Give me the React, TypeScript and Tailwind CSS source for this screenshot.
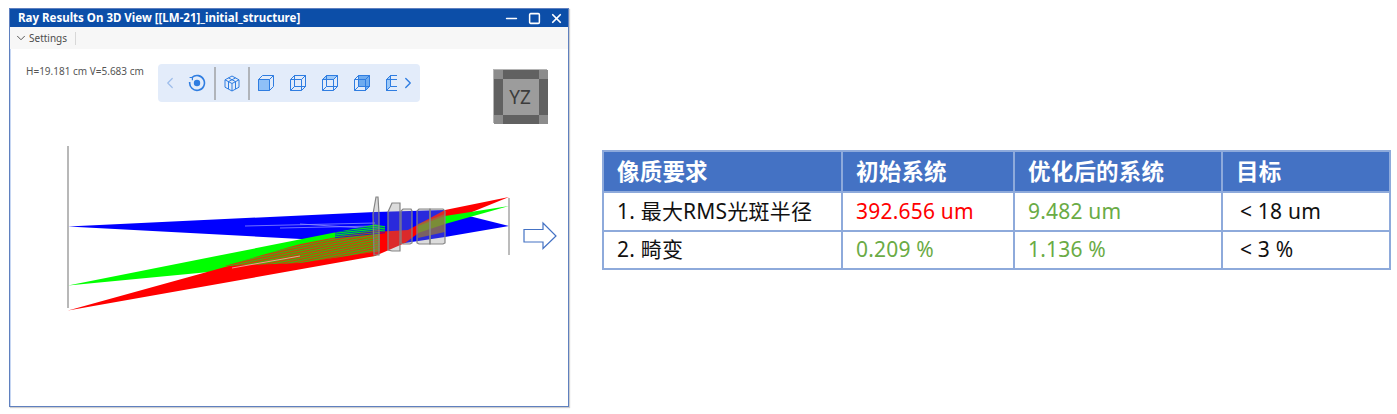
import { Minus, Square, X, ChevronDown, ChevronLeft, ChevronRight } from 'lucide-react';

const blue = '#2f7de1';
const hatch = Array.from({ length: 26 }, (_, i) => 229 + i * 1.2);
const upperHatch = Array.from({ length: 5 }, (_, i) => 224.5 + i * 1.8);
const lenses = [
  'M374 255 L373 214 L376 197 L378 197 L379 214 L379 255 Z',
  'M388 250 L388 212 L392 203 L400 203 L400 251 L392 251 Z',
  'M401 243 L401 211 L403 209 L411 209 L412 211 L412 243 L410 244 L403 244 Z',
  'M417 243 L417 211 L419 209 L430 209 L430 244 L419 244 Z',
  'M430 244 L430 209 L443 209 L445 211 L445 243 L443 244 Z',
];

// face: which side of the wire cube is shaded
function CubeIcon({ face }: { face: 'front' | 'back' | 'top' | 'side' | 'left' }) {
  if (face === 'front') {
    return (
      <svg width="18" height="18" viewBox="0 0 18 18" fill="none" stroke={blue} strokeWidth="1">
        <path d="M1.5 5.5 L5.5 1.5 H16.5 V12.5 L12.5 16.5 H1.5 Z M12.5 5.5 L16.5 1.5" />
        <path d="M1.5 5.5 H12.5 V16.5 H1.5 Z" fill="#8fc0f7" />
      </svg>
    );
  }
  return (
    <svg width="18" height="18" viewBox="0 0 18 18" fill="none" stroke={blue} strokeWidth="1">
      {face === 'back' && <path d="M5.5 1.5 H16.5 V12.5 H5.5 Z" fill="#e3ecfa" />}
      {face === 'top' && <path d="M1.5 5.5 L5.5 1.5 H16.5 L12.5 5.5 Z" fill="#9cc8f7" />}
      {face === 'side' && <path d="M5.5 5.5 H12.5 V12.5 H5.5 Z M5.5 1.5 H16.5 V12.5 L12.5 16.5 V5.5 H5.5 Z" fill="#6eabef" />}
      {face === 'left' && <path d="M1.5 5.5 L5.5 1.5 V12.5 L1.5 16.5 Z" fill="#9cc8f7" />}
      <path d="M1.5 5.5 H12.5 V16.5 H1.5 Z M5.5 1.5 H16.5 V12.5 L12.5 16.5 M1.5 5.5 L5.5 1.5 M16.5 1.5 L12.5 5.5 M5.5 1.5 V12.5 H16.5 M5.5 12.5 L1.5 16.5" />
    </svg>
  );
}

function Toolbar() {
  return (
    <div className="flex h-[38px] w-[262px] items-center rounded bg-[#e3ecfa]">
      <ChevronLeft className="ml-[3px] h-[18px] w-[18px] shrink-0 text-[#9dbdeb]" strokeWidth={1.6} />
      <svg className="ml-[9px] shrink-0" width="18" height="18" viewBox="0 0 18 18" fill="none" stroke={blue} strokeWidth="1.6">
        <path d="M4 3.5 A7.4 7.4 0 1 1 1.7 8" />
        <path d="M1.6 3.5 H4.4 V6.2" strokeWidth="1.2" />
        <circle cx="9" cy="9" r="3.2" fill={blue} stroke="none" />
      </svg>
      <div className="ml-[8px] h-[33px] w-[2px] shrink-0 bg-[#b0b4ba]" />
      <svg className="ml-[8px] shrink-0" width="16" height="17" viewBox="0 0 16 17" fill="none" stroke={blue} strokeWidth="1">
        <path d="M8 1 L15 4.8 V12.2 L8 16 L1 12.2 V4.8 Z M1 4.8 L8 8.5 L15 4.8 M8 8.5 V16 M4.5 2.9 L11.5 6.6 M11.5 2.9 L4.5 6.6 M4.5 6.6 V14 M11.5 6.6 V14" />
      </svg>
      <div className="ml-[8px] h-[33px] w-[2px] shrink-0 bg-[#b0b4ba]" />
      <div className="ml-[7px] flex shrink-0 gap-[14px]">
        <CubeIcon face="front" />
        <CubeIcon face="back" />
        <CubeIcon face="top" />
        <CubeIcon face="side" />
      </div>
      <div className="ml-[14px] w-[12px] shrink-0 overflow-hidden">
        <CubeIcon face="left" />
      </div>
      <ChevronRight className="ml-[2px] h-[18px] w-[18px] shrink-0 text-[#2f7de1]" strokeWidth={1.8} />
    </div>
  );
}

function ViewCube() {
  return (
    <div className="grid h-[54px] w-[54px] grid-cols-[9px_36px_9px] grid-rows-[9px_36px_9px] border border-[#b5b5b5] font-['Noto_Sans',sans-serif]">
      <div className="bg-[#8c8c8c]" />
      <div className="bg-[#616161]" />
      <div className="bg-[#8c8c8c]" />
      <div className="bg-[#616161]" />
      <div className="flex items-center justify-center bg-[#9c9c9c] pr-[2px] text-[19px] text-[#3c3c3c]">YZ</div>
      <div className="bg-[#616161]" />
      <div className="bg-[#8c8c8c]" />
      <div className="bg-[#616161]" />
      <div className="bg-[#8c8c8c]" />
    </div>
  );
}

function RayDiagram() {
  return (
    <svg className="mt-[17px] ml-[30px] block" width="520" height="180" viewBox="40 140 520 180">
      <defs>
        <clipPath id="overlap">
          <path d="M225 266 L300 244 L380 229 L380 251 L300 263 Z" />
        </clipPath>
      </defs>
      <path d="M68 226.5 L375 212 L445 210 L509 226 L445 237 L405 243 L375 243 Z" fill="#0000ff" />
      <path d="M245 226 L375 223 M280 228 L375 226 M300 224 L380 229" stroke="#8a8cff" strokeWidth="0.8" fill="none" />
      <path d="M68 285.5 L375 224.5 L385 226 L385 250 L375 256 Z" fill="#00ff00" />
      <path d="M68 310.5 L225 267 L375 232 L408 230 L445 210 L509 197 L445 223 L420 232 L405 243 L375 256 Z" fill="#ff0000" />
      <path d="M418 226 L445 216 L509 206 L445 224 L418 233 Z" fill="#00ff00" />
      <path d="M418 224 L445 214 V232 L418 238 Z" fill="#9a6a1a" opacity="0.75" />
      <g clipPath="url(#overlap)">
        <rect x="220" y="225" width="165" height="45" fill="#8a7a10" />
        {hatch.map((y, i) => (
          <line
            key={y}
            x1="220"
            y1={y + 33}
            x2="385"
            y2={y - 2}
            stroke={i % 2 === 0 ? '#ff1a00' : '#10d810'}
            strokeWidth="0.6"
          />
        ))}
      </g>
      <g stroke="#0000ff" strokeWidth="0.7">
        {upperHatch.map(y => (
          <line key={y} x1="335" y1={y + 6} x2="385" y2={y + 1} />
        ))}
      </g>
      <path d="M232 268 L300 256" stroke="#ffb0b0" strokeWidth="0.8" />
      <g fill="#8a8a8a" fillOpacity="0.3" stroke="#858585" strokeWidth="1.2">
        {lenses.map(d => (
          <path key={d} d={d} />
        ))}
      </g>
      <line x1="68" y1="146" x2="68" y2="308" stroke="#9a9a9a" strokeWidth="1.4" />
      <line x1="509" y1="198" x2="509" y2="255" stroke="#8f8f8f" strokeWidth="1.2" />
      <path d="M524 229.5 H543 V223 L556 236 L543 248.5 V242 H524 Z" fill="#fff" stroke="#4472c4" strokeWidth="1.2" />
    </svg>
  );
}

function RayWindow() {
  return (
    <div className="ml-[9px] mt-[8px] h-[399px] w-[560px] shrink-0 border border-[#5f80bf] bg-white font-['Noto_Sans',sans-serif] shadow-[inset_1px_0_0_#c6d6f2,1px_1px_1px_#cfcfcf]">
      <div className="flex h-[18px] items-center bg-[#0c4ea8] pl-[8px] pr-[4px] text-white">
        <span className="text-[11.5px] font-bold leading-none">Ray Results On 3D View [[LM-21]_initial_structure]</span>
        <Minus className="ml-auto h-[17px] w-[17px]" />
        <Square className="ml-[8px] h-[13px] w-[13px]" strokeWidth={2.8} />
        <X className="ml-[8px] h-[15px] w-[15px]" strokeWidth={2.8} />
      </div>
      <div className="flex h-[22px] items-center bg-[#f7f7f7] pl-[4px] text-[10px] text-[#4c4c4c]">
        <ChevronDown className="h-[14px] w-[14px]" strokeWidth={1.6} />
        <span className="ml-[1px]">Settings</span>
        <div className="ml-[8px] h-[13px] w-px bg-[#d8d8d8]" />
      </div>
      <div className="flex items-start pt-[15px]">
        <span className="ml-[16px] w-[132px] shrink-0 text-[10px] leading-[14px] text-[#555]">H=19.181 cm V=5.683 cm</span>
        <Toolbar />
        <div className="ml-[73px] mt-[5px]">
          <ViewCube />
        </div>
      </div>
      <RayDiagram />
    </div>
  );
}

const rows = [
  { name: '1. 最大RMS光斑半径', start: '392.656 um', startColor: 'text-[#ff0000]', end: '9.482 um', goal: '< 18 um', height: 'h-[39px]' },
  { name: '2. 畸变', start: '0.209 %', startColor: 'text-[#6aab45]', end: '1.136 %', goal: '< 3 %', height: 'h-[38px]' },
];

function ResultTable() {
  const border = 'border-2 border-[#8eaadb]';
  return (
    <table className="ml-[33px] mt-[150px] w-[787px] shrink-0 table-fixed border-collapse font-['Noto_Sans','Noto_Sans_CJK_SC',sans-serif] text-[21px] tracking-[0.2px]">
      <colgroup>
        <col className="w-[239px]" />
        <col className="w-[172px]" />
        <col className="w-[208px]" />
        <col className="w-[168px]" />
      </colgroup>
      <thead>
        <tr className="h-[41px] bg-[#4472c4] text-left text-[22.5px] font-bold text-white">
          <th className={`${border} pl-[13px]`}>像质要求</th>
          <th className={`${border} pl-[13px]`}>初始系统</th>
          <th className={`${border} pl-[13px]`}>优化后的系统</th>
          <th className={`${border} pl-[13px]`}>目标</th>
        </tr>
      </thead>
      <tbody>
        {rows.map(row => (
          <tr key={row.name} className={row.height}>
            <td className={`${border} pl-[13px] text-[#111]`}>{row.name}</td>
            <td className={`${border} pl-[13px] ${row.startColor}`}>{row.start}</td>
            <td className={`${border} pl-[13px] text-[#6aab45]`}>{row.end}</td>
            <td className={`${border} pl-[17px] text-[#111]`}>{row.goal}</td>
          </tr>
        ))}
      </tbody>
    </table>
  );
}

export default function App() {
  return (
    <div className="flex h-[414px] w-[1397px] items-start overflow-hidden bg-white">
      <RayWindow />
      <ResultTable />
    </div>
  );
}
